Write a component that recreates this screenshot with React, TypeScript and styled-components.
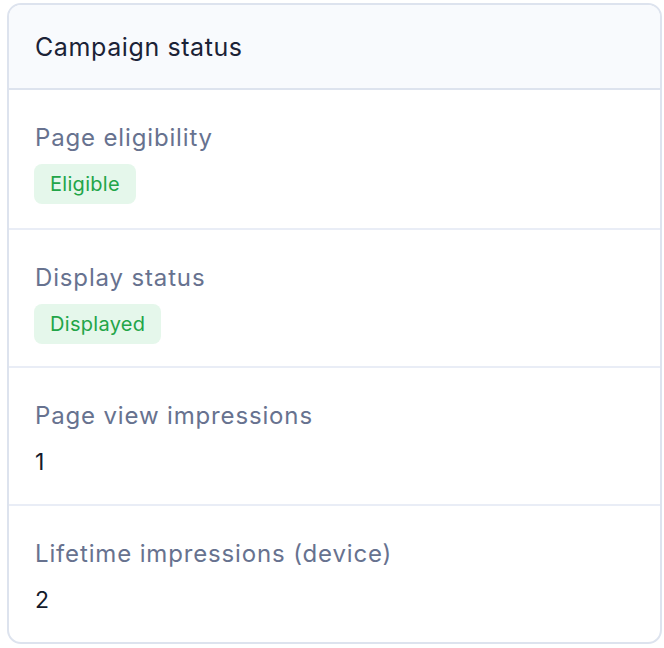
import React from "react";
import styled, { createGlobalStyle } from "styled-components";

const GlobalStyle = createGlobalStyle`
  html, body {
    margin: 0;
    padding: 0;
    background: #ffffff;
  }
  body {
    font-family: Inter, "Noto Sans", sans-serif;
  }
`;

const Page = styled.div`
  padding: 3px 2px 6px 7px;
`;

const Card = styled.section`
  width: 655px;
  box-sizing: border-box;
  border: 2px solid #dde3ee;
  border-radius: 14px;
  overflow: hidden;
  background: #ffffff;
`;

const Header = styled.header`
  height: 85px;
  box-sizing: border-box;
  display: flex;
  align-items: center;
  padding: 0 26px;
  background: #f8fafd;
  border-bottom: 2px solid #dde3ee;
`;

const Title = styled.h2`
  margin: 0;
  font-size: 25px;
  font-weight: 400;
  letter-spacing: 0.6px;
  color: #1b2236;
`;

const Row = styled.div`
  display: flex;
  flex-direction: column;
  align-items: flex-start;
  gap: 10px;
  height: 138px;
  box-sizing: border-box;
  padding: 32px 26px 0 25px;
  & + & {
    border-top: 2px solid #e9edf6;
  }
`;

const Label = styled.div`
  font-size: 24px;
  line-height: 32px;
  letter-spacing: 0.85px;
  color: #67728f;
  padding-left: 1px;
`;

const Badge = styled.span`
  display: inline-flex;
  align-items: center;
  height: 40px;
  padding: 0 16px;
  border-radius: 8px;
  background: #e5f7eb;
  color: #22a548;
  font-size: 20px;
  letter-spacing: 0.3px;
`;

const Value = styled.div`
  padding-left: 1px;
  font-size: 23px;
  line-height: 40px;
  color: #141a2b;
`;

type Item = { label: string; badge?: string; value?: string };

const items: Item[] = [
  { label: "Page eligibility", badge: "Eligible" },
  { label: "Display status", badge: "Displayed" },
  { label: "Page view impressions", value: "1" },
  { label: "Lifetime impressions (device)", value: "2" },
];

export default function App() {
  return (
    <>
      <GlobalStyle />
      <Page>
        <Card>
          <Header>
            <Title>Campaign status</Title>
          </Header>
          {items.map((it) => (
            <Row key={it.label}>
              <Label>{it.label}</Label>
              {it.badge ? <Badge>{it.badge}</Badge> : <Value>{it.value}</Value>}
            </Row>
          ))}
        </Card>
      </Page>
    </>
  );
}
